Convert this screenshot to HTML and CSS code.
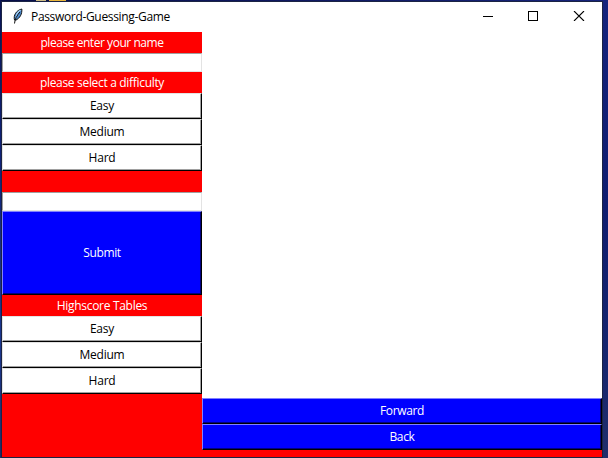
FILE: index.html
```html
<!DOCTYPE html>
<html lang="en">
<head>
<meta charset="utf-8">
<title>Password-Guessing-Game</title>
<link rel="stylesheet" href="styles.css">
</head>
<body>
<div class="window">
  <header class="titlebar">
    <svg class="feather" width="10" height="16" viewBox="0 0 10 16">
      <path d="M1.5 12C.2 7.5 3.2 2.3 8.8 1C9.3 6 6.8 10.2 2.8 12.2Z" fill="#4c8bd0" stroke="#111" stroke-width="1"/>
      <path d="M3.2 9.5C3.3 6.5 5 3.5 7.6 2" fill="none" stroke="#a9d2f5" stroke-width="1.2"/>
      <path d="M1.5 15.5C1.8 11.5 4 7 7 4" fill="none" stroke="#111" stroke-width="1"/>
    </svg>
    <h1 class="title">Password-Guessing-Game</h1>
    <svg class="controls" width="102" height="10" viewBox="0 0 102 10" fill="none" stroke="#000" shape-rendering="crispEdges">
      <path d="M0 5.5H10M45.5 .5H54.5V9.5H45.5Z"/>
      <path d="M91 0L101 10M101 0L91 10" shape-rendering="auto" stroke-width="1.1"/>
    </svg>
  </header>
  <main class="content">
    <section class="sidebar">
      <label class="label name" for="name">please enter your name</label>
      <input class="entry" id="name">
      <div class="label difficulty">please select a difficulty</div>
      <button class="button">Easy</button>
      <button class="button">Medium</button>
      <button class="button">Hard</button>
      <div class="label"></div>
      <input class="entry">
      <button class="button blue submit">Submit</button>
      <div class="label scores">Highscore Tables</div>
      <button class="button">Easy</button>
      <button class="button">Medium</button>
      <button class="button">Hard</button>
    </section>
    <section class="main">
      <div class="output"></div>
      <button class="button blue">Forward</button>
      <button class="button blue">Back</button>
    </section>
  </main>
</div>
</body>
</html>
```
FILE: styles.css
```css
* { box-sizing: border-box; }
body {
  margin: 0;
  height: 458px;
  padding: 1px 5px 0 1px;
  overflow: hidden;
  font: 12px/16px "Open Sans", "Noto Sans", sans-serif;
  background:
    linear-gradient(#cdbb84, #cdbb84) 36px 0 / 10px 1px no-repeat,
    linear-gradient(#e8b53c, #e8b53c) 49px 0 / 17px 1px no-repeat,
    linear-gradient(#0a1455, #10237a 35%, #1b3790 75%, #1b2c66) 0 0 / 1px 100% no-repeat,
    linear-gradient(#15237d, #101d70 45%, #17266e 80%, #222e6b) 100% 0 / 6px 100% no-repeat,
    linear-gradient(90deg, #070e48, #16247b);
}
.window {
  height: 457px;
  border: 1px solid #1b2344;
  display: flex;
  flex-direction: column;
  background: red;
}
.titlebar {
  height: 30px;
  flex: none;
  display: flex;
  align-items: center;
  padding: 0 18px 2px 11px;
  background: #fff;
}
.feather { margin-right: 8px; }
.title { margin: 0; padding-top: 2px; font-size: 12px; font-weight: 400; line-height: 16px; letter-spacing: -.33px; }
.controls { margin-left: auto; margin-right: -1px; }
.content { flex: 1; display: flex; }
.sidebar { width: 200px; display: flex; flex-direction: column; }
.main { width: 400px; display: flex; flex-direction: column; }
.output { height: 366px; background: #fff; }
.label {
  height: 21px;
  padding-top: 3px;
  text-align: center;
  color: #fff;
}
.name { letter-spacing: -.45px; }
.difficulty { letter-spacing: -.32px; }
.scores { letter-spacing: -.3px; }
.entry {
  width: 200px;
  height: 19px;
  padding: 0 2px;
  border: 1px solid;
  border-color: #a0a0a0 #e3e3e3 #e3e3e3 #a0a0a0;
  border-radius: 0;
  background: #fff;
  font: inherit;
}
.button {
  height: 26px;
  padding: 0;
  border: 1px solid;
  border-color: #e3e3e3 #000 #000 #e3e3e3;
  border-radius: 0;
  box-shadow: inset -1px -1px #a0a0a0;
  background: #fff;
  color: #000;
  font: inherit;
  letter-spacing: -.25px;
}
.blue {
  border-color: #8080ff #000 #000 #8080ff;
  box-shadow: inset -1px -1px #000080;
  background: #00f;
  color: #fff;
  letter-spacing: -.35px;
}
.submit { height: 84px; }
```
